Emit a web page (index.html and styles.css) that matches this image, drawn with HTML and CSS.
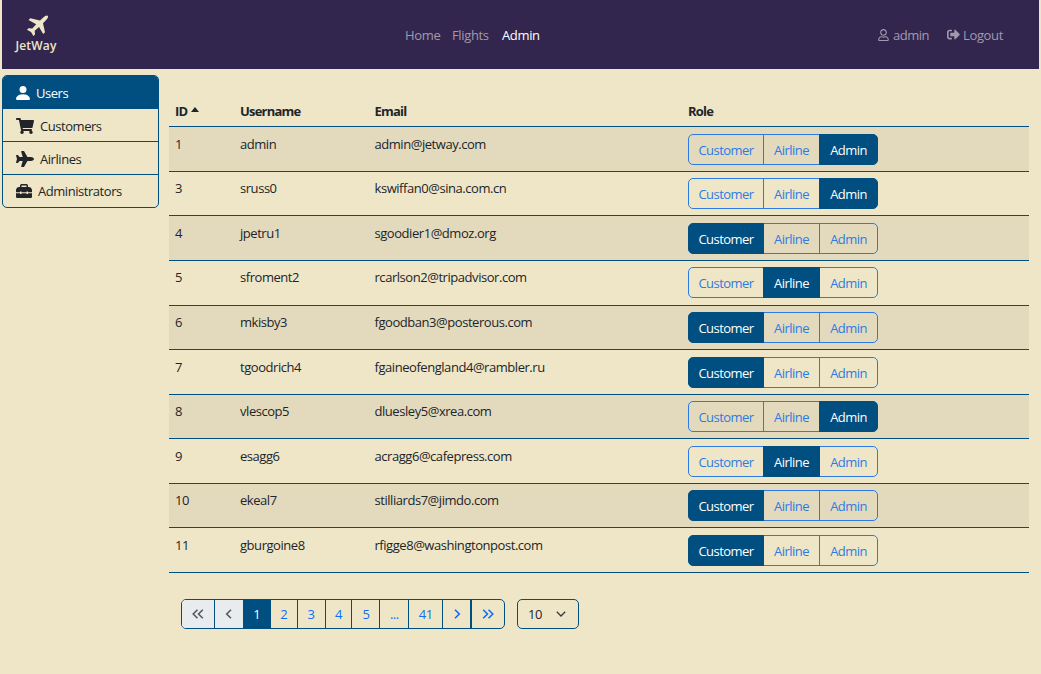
FILE: index.html
```html
<!DOCTYPE html>
<html lang="en">
<head>
<meta charset="utf-8">
<title>JetWay</title>
<link rel="stylesheet" href="styles.css">
</head>
<body>
<header class="navbar">
  <a class="brand">
    <svg class="brand-plane" viewBox="0 0 23 22"><path d="M17.8 2Q20.2-.2 21.7.8 22.8 2.2 20.6 4.5L17 8.2 19 17.2 17.2 19 13 11.9 8.7 15.7 9 19.4 7.4 21 5 16.9 1 14.8 2.5 13.2 6.3 13.5 10.2 9.3 2.5 5 4.3 3.2 14 5.4Z"/></svg>
    <span class="brand-name">JetWay</span>
  </a>
  <nav class="nav-main"><a class="w-home">Home</a><a class="w-flights">Flights</a><a class="current">Admin</a></nav>
  <nav class="nav-account">
    <a class="account"><svg class="ico-user" viewBox="0 0 448 512"><path d="M313.6 304c-28.7 0-42.5 16-89.6 16-47.1 0-60.8-16-89.6-16C60.2 304 0 364.2 0 438.4V464c0 26.5 21.5 48 48 48h352c26.5 0 48-21.5 48-48v-25.6c0-74.2-60.2-134.4-134.4-134.4zM400 464H48v-25.6c0-47.6 38.8-86.4 86.4-86.4 14.6 0 38.3 16 89.6 16 51.7 0 74.9-16 89.6-16 47.6 0 86.4 38.8 86.4 86.4V464zM224 288c79.5 0 144-64.5 144-144S303.5 0 224 0 80 64.5 80 144s64.5 144 144 144zm0-240c52.9 0 96 43.1 96 96s-43.1 96-96 96-96-43.1-96-96 43.1-96 96-96z"/></svg>admin</a>
    <a class="logout"><svg class="ico-out" viewBox="0 0 512 512"><path d="M497 273L329 441c-15 15-41 4.5-41-17v-96H152c-13.3 0-24-10.7-24-24v-96c0-13.3 10.7-24 24-24h136V88c0-21.4 25.9-32 41-17l168 168c9.3 9.4 9.3 24.6 0 34zM192 436v-40c0-6.6-5.4-12-12-12H96c-17.7 0-32-14.3-32-32V160c0-17.7 14.3-32 32-32h84c6.6 0 12-5.4 12-12V76c0-6.6-5.4-12-12-12H96c-53 0-96 43-96 96v192c0 53 43 96 96 96h84c6.6 0 12-5.4 12-12z"/></svg>Logout</a>
  </nav>
</header>
<div class="layout">
  <aside class="sidebar">
    <a class="side-item active"><svg class="ico-person" viewBox="2 2 12 12"><path d="M3 14s-1 0-1-1 1-4 6-4 6 3 6 4-1 1-1 1H3Zm5-6a3 3 0 1 0 0-6 3 3 0 0 0 0 6Z"/></svg>Users</a>
    <a class="side-item"><svg class="ico-wide" viewBox="0 0 576 512"><path d="M528.12 301.319l47.273-208C578.806 78.301 567.391 64 551.99 64H159.208l-9.166-44.81C147.758 8.021 137.93 0 126.529 0H24C10.745 0 0 10.745 0 24v16c0 13.255 10.745 24 24 24h69.883l70.248 343.435C147.325 417.1 136 435.222 136 456c0 30.928 25.072 56 56 56s56-25.072 56-56c0-15.674-6.447-29.835-16.824-40h209.647C430.447 426.165 424 440.326 424 456c0 30.928 25.072 56 56 56s56-25.072 56-56c0-22.172-12.888-41.332-31.579-50.405l5.517-24.276c3.413-15.018-8.002-29.319-23.403-29.319H218.117l-6.545-32h293.145c11.206 0 20.92-7.754 23.403-18.681z"/></svg>Customers</a>
    <a class="side-item"><svg class="ico-wide" viewBox="0 0 576 512"><path d="M480 192H365.71L260.61 8.06A16.014 16.014 0 0 0 246.71 0h-65.5c-10.63 0-18.3 10.17-15.38 20.39L214.86 192H112l-43.2-57.6c-3.02-4.03-7.77-6.4-12.8-6.4H16.01C5.6 128-2.04 137.78.49 147.88L32 256 .49 364.12C-2.04 374.22 5.6 384 16.01 384H56c5.04 0 9.78-2.37 12.8-6.4L112 320h102.86l-49.03 171.6c-2.92 10.22 4.75 20.4 15.38 20.4h65.5c5.74 0 11.04-3.08 13.89-8.06L365.71 320H480c35.35 0 96-28.65 96-64s-60.65-64-96-64z"/></svg>Airlines</a>
    <a class="side-item last"><svg class="ico-case" viewBox="0 0 16 16"><path fill-rule="evenodd" d="M4 4V2.6Q4 1 5.6 1h4.8Q12 1 12 2.6V4h1.2Q14 4 14.6 4.6l.8.8q.6.6.6 1.4V9.2h-4V8.5h-1.5v.7h-5v-.7H4v.7H0V6.8Q0 6 .6 5.4l.8-.8Q2 4 2.8 4zM5.5 4h5V2.5h-5zM0 10.3h4v.8h1.5v-.8h5v.8H12v-.8h4v3.4q0 1.3-1.3 1.3H1.3Q0 15 0 13.7z"/></svg>Administrators</a>
  </aside>
  <main class="content">
    <div class="table" id="users">
      <div class="row head"><span>ID <i class="caret"></i></span><span>Username</span><span>Email</span><span>Role</span></div>
    </div>
    <div class="footer">
      <div class="pager">
        <a class="off first"><svg viewBox="0 0 12 10"><path d="M5.5.7 1.2 5l4.3 4.3M10.8.7 6.5 5l4.3 4.3"/></svg></a>
        <a class="off prev"><svg viewBox="0 0 12 10"><path d="M8 .7 3.7 5 8 9.3"/></svg></a>
        <a class="on">1</a><a class="two">2</a><a>3</a><a class="four">4</a><a>5</a><a class="dots">...</a><a class="last-num">41</a>
        <a class="next"><svg viewBox="0 0 12 10"><path d="M4 .7 8.3 5 4 9.3"/></svg></a>
        <a class="end"><svg viewBox="0 0 12 10"><path d="M1.2.7 5.5 5 1.2 9.3M6.5.7 10.8 5 6.5 9.3"/></svg></a>
      </div>
      <div class="page-size">10<svg viewBox="0 0 10 6"><path d="M.8.8 5 5 9.2.8"/></svg></div>
    </div>
  </main>
</div>
<script src="users.js"></script>
</body>
</html>
```
FILE: styles.css
```css
* { box-sizing: border-box; }
body {
  margin: 0;
  height: 674px;
  overflow: hidden;
  background: #efe6c8;
  color: #212529;
  font: 13px/20px "Open Sans", "Noto Sans", sans-serif;
  letter-spacing: -0.45px;
}
svg { flex: none; fill: currentColor; }
.navbar {
  display: grid;
  grid-template-columns: 403px 1fr auto;
  height: 69px;
  margin: 0 2px;
  padding-right: 35px;
  background: #32264f;
  color: #a09aae;
}
.brand {
  display: flex;
  flex-direction: column;
  align-items: center;
  width: 68px;
  padding-top: 15px;
  color: #efe6c8;
}
.brand-plane { width: 23px; height: 22px; margin-left: 2px; }
.brand-name { font-size: 12px; font-weight: 600; line-height: 17px; letter-spacing: 0.2px; }
.nav-main, .nav-account { display: flex; align-items: center; letter-spacing: -0.35px; }
.w-home { width: 47px; }
.w-flights { width: 50px; }
.current { color: #fff; }
.account, .logout { display: flex; align-items: center; }
.account { width: 69px; gap: 4px; letter-spacing: -0.5px; }
.logout { width: 57px; gap: 3px; }
.ico-user { width: 11px; height: 12px; }
.ico-out { width: 13px; height: 13px; }
.layout { display: flex; gap: 10px; padding: 6px 12px 0 2px; }
.sidebar {
  width: 157px;
  height: 133px;
  border: 1px solid #004f80;
  border-radius: 5px;
  overflow: hidden;
}
.side-item {
  display: flex;
  align-items: center;
  gap: 6px;
  height: 33px;
  padding: 1px 0 0 13px;
  border-bottom: 1px solid #004f80;
}
.side-item.last { height: 32px; padding-top: 0; padding-bottom: 1px; border: 0; }
.active { background: #004f80; color: #fff; }
.ico-person { width: 14px; height: 16px; }
.ico-wide { width: 18px; height: 16px; }
.ico-case { width: 16px; height: 16px; }
.content { flex: 1; }
.table { padding-top: 20.4px; }
.row {
  display: grid;
  grid-template-columns: 65px 134.5px 313.5px 1fr;
  height: 44.55px;
  padding: 6.43px 6px 0;
  border-bottom: 1px solid #004f80;
}
.row.head { height: 32px; padding-top: 6px; font-weight: 700; letter-spacing: -0.8px; }
.row:nth-child(even) { background: #e3dabe; }
.caret {
  display: inline-block;
  margin-left: 1px;
  vertical-align: 4px;
  border: 4.5px solid transparent;
  border-top: 0;
  border-bottom: 5px solid #212529;
}
.roles { display: flex; height: 31px; color: #2c7be5; text-align: center; letter-spacing: -0.55px; }
.roles a { border: 1px solid #2c7be5; line-height: 31px; }
.roles a:nth-child(1) { width: 76px; border-radius: 5px 0 0 5px; }
.roles a:nth-child(2) { width: 57px; margin-left: -1px; }
.roles a:nth-child(3) { width: 59px; margin-left: -1px; border-radius: 0 5px 5px 0; }
.roles a.picked { position: relative; background: #004f80; border-color: #004f80; color: #fff; }
.footer { display: flex; gap: 12px; padding: 26px 0 0 12px; }
.pager {
  display: flex;
  width: 324px;
  height: 30px;
  border: 1px solid #004f80;
  border-radius: 5px;
  overflow: hidden;
  color: #0d6efd;
}
.pager a {
  display: flex;
  align-items: center;
  justify-content: center;
  width: 28px;
  padding-top: 1px;
  border-right: 1px solid #004f80;
}
.pager svg { width: 12px; height: 10px; fill: none; stroke: currentColor; stroke-width: 1.6; }
.pager .off { background: #e9ecef; color: #555b61; }
.pager .first { width: 33px; }
.pager .prev { width: 29px; }
.pager .on { width: 27px; background: #004f80; color: #fff; }
.pager .two, .pager .four { width: 27px; }
.pager .dots { width: 29px; }
.pager .last-num { width: 34px; }
.pager .next { width: 29px; border-right-width: 2px; }
.pager .end { width: 32px; border: 0; }
.page-size {
  display: flex;
  align-items: center;
  justify-content: space-between;
  width: 62px;
  height: 30px;
  padding: 1px 12px 0 10px;
  border: 1px solid #004f80;
  border-radius: 5px;
}
.page-size svg { width: 10px; height: 6px; fill: none; stroke: #343a40; stroke-width: 1.3; }
```
FILE: users.js
```js
const roles = ["Customer", "Airline", "Admin"];
const users = [
  [1, "admin", "admin@jetway.com", "Admin"],
  [3, "sruss0", "kswiffan0@sina.com.cn", "Admin"],
  [4, "jpetru1", "sgoodier1@dmoz.org", "Customer"],
  [5, "sfroment2", "rcarlson2@tripadvisor.com", "Airline"],
  [6, "mkisby3", "fgoodban3@posterous.com", "Customer"],
  [7, "tgoodrich4", "fgaineofengland4@rambler.ru", "Customer"],
  [8, "vlescop5", "dluesley5@xrea.com", "Admin"],
  [9, "esagg6", "acragg6@cafepress.com", "Airline"],
  [10, "ekeal7", "stilliards7@jimdo.com", "Customer"],
  [11, "gburgoine8", "rfigge8@washingtonpost.com", "Customer"]
];
const table = document.getElementById("users");
for (const [id, name, email, role] of users) {
  const buttons = roles.map(r => `<a class="${r === role ? "picked" : ""}">${r}</a>`).join("");
  table.insertAdjacentHTML("beforeend",
    `<div class="row"><span>${id}</span><span>${name}</span><span>${email}</span><div class="roles">${buttons}</div></div>`);
}
```
